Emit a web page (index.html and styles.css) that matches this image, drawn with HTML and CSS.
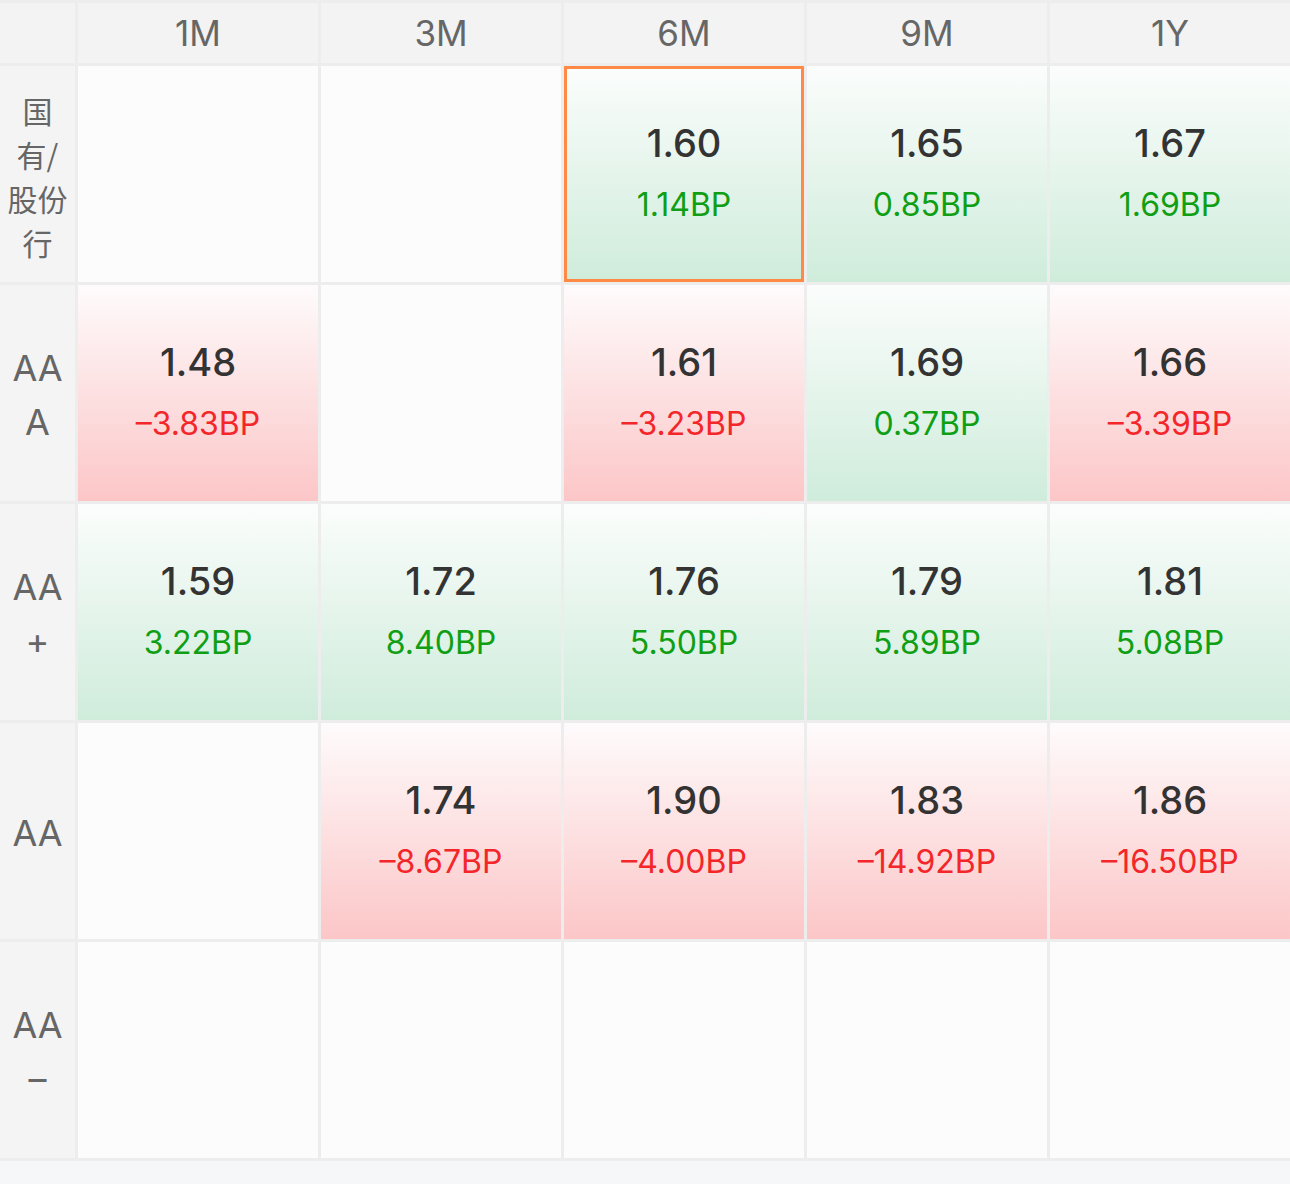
FILE: index.html
```html
<!DOCTYPE html>
<html lang="zh">
<head>
<meta charset="utf-8">
<title>Rates matrix</title>
<link rel="stylesheet" href="styles.css">
</head>
<body>
<div class="matrix">
  <div class="hd corner"></div>
  <div class="hd">1M</div>
  <div class="hd">3M</div>
  <div class="hd">6M</div>
  <div class="hd">9M</div>
  <div class="hd">1Y</div>

  <div class="lbl cjk">国<br>有/<br>股份<br>行</div>
  <div class="cell empty"></div>
  <div class="cell empty"></div>
  <div class="cell up selected"><span class="val">1.60</span><span class="bp">1.14BP</span></div>
  <div class="cell up"><span class="val">1.65</span><span class="bp">0.85BP</span></div>
  <div class="cell up"><span class="val">1.67</span><span class="bp">1.69BP</span></div>

  <div class="lbl">AA<br>A</div>
  <div class="cell down"><span class="val">1.48</span><span class="bp">–3.83BP</span></div>
  <div class="cell empty"></div>
  <div class="cell down"><span class="val">1.61</span><span class="bp">–3.23BP</span></div>
  <div class="cell up"><span class="val">1.69</span><span class="bp">0.37BP</span></div>
  <div class="cell down"><span class="val">1.66</span><span class="bp">–3.39BP</span></div>

  <div class="lbl">AA<br>+</div>
  <div class="cell up"><span class="val">1.59</span><span class="bp">3.22BP</span></div>
  <div class="cell up"><span class="val">1.72</span><span class="bp">8.40BP</span></div>
  <div class="cell up"><span class="val">1.76</span><span class="bp">5.50BP</span></div>
  <div class="cell up"><span class="val">1.79</span><span class="bp">5.89BP</span></div>
  <div class="cell up"><span class="val">1.81</span><span class="bp">5.08BP</span></div>

  <div class="lbl">AA</div>
  <div class="cell empty"></div>
  <div class="cell down"><span class="val">1.74</span><span class="bp">–8.67BP</span></div>
  <div class="cell down"><span class="val">1.90</span><span class="bp">–4.00BP</span></div>
  <div class="cell down"><span class="val">1.83</span><span class="bp">–14.92BP</span></div>
  <div class="cell down"><span class="val">1.86</span><span class="bp">–16.50BP</span></div>

  <div class="lbl">AA<br>–</div>
  <div class="cell empty"></div>
  <div class="cell empty"></div>
  <div class="cell empty"></div>
  <div class="cell empty"></div>
  <div class="cell empty"></div>
</div>
</body>
</html>
```
FILE: styles.css
```css
html, body {
  margin: 0;
  padding: 0;
  background: #f6f7f9;
  font-family: "Inter", "Noto Sans CJK SC", sans-serif;
}
.matrix {
  display: grid;
  grid-template-columns: 75px repeat(5, 240px);
  grid-template-rows: 60px repeat(5, 216px);
  gap: 3px;
  padding: 3px 0;
  background: #ededed;
  width: 1290px;
}
.hd {
  background: #f3f3f3;
  color: #666;
  font-size: 35px;
  display: flex;
  align-items: center;
  justify-content: center;
  line-height: 1;
}
.lbl {
  background: #f4f4f4;
  color: #666;
  font-size: 36px;
  line-height: 54px;
  display: flex;
  align-items: center;
  justify-content: center;
  text-align: center;
  padding-top: 4px;
  box-sizing: border-box;
}
.lbl.cjk {
  font-family: "Noto Sans CJK SC", sans-serif;
  font-size: 30px;
  line-height: 44px;
}
.cell {
  display: flex;
  flex-direction: column;
  align-items: center;
  justify-content: center;
  box-sizing: border-box;
}
.empty { background: #fcfcfc; }
.up { background: linear-gradient(to bottom, #fbfdfc 0%, #cfecdb 100%); }
.down { background: linear-gradient(to bottom, #fefbfc 0%, #fcc6c7 100%); }
.selected { border: 3px solid #ff8a45; }
.val {
  font-size: 38px;
  font-weight: 500;
  color: #333;
  line-height: 60px;
}
.bp {
  font-size: 32px;
  line-height: 60px;
  padding-top: 2px;
}
.up .bp { color: #109f14; }
.down .bp { color: #f3262a; }
```
